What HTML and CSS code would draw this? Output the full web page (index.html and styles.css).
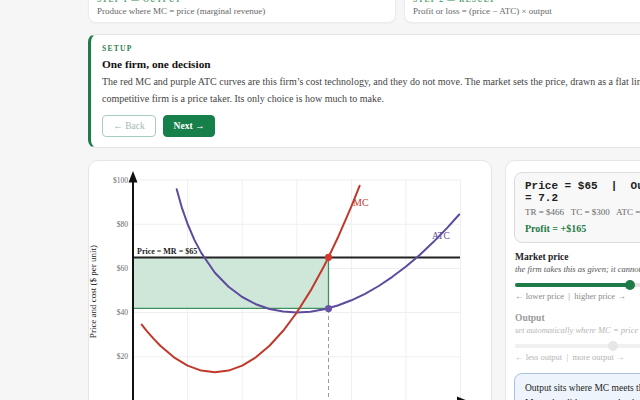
FILE: index.html
```html
<!DOCTYPE html>
<html lang="en">
<head>
<meta charset="utf-8">
<title>One firm, one decision</title>
<link rel="stylesheet" href="styles.css">
</head>
<body>
<div class="page">
  <div class="steps">
    <div class="step">
      <div class="step-label">STEP 1 — OUTPUT</div>
      <div class="step-text">Produce where MC = price (marginal revenue)</div>
    </div>
    <div class="step">
      <div class="step-label">STEP 2 — RESULT</div>
      <div class="step-text">Profit or loss = (price − ATC) × output</div>
    </div>
  </div>

  <section class="setup">
    <div class="setup-label">SETUP</div>
    <h2 class="setup-title">One firm, one decision</h2>
    <p class="setup-body">The red MC and purple ATC curves are this firm’s cost technology, and they do not move. The market sets the price, drawn as a flat line, because a competitive firm is a price taker. Its only choice is how much to make.</p>
    <div class="buttons">
      <button class="btn btn-back">← Back</button>
      <button class="btn btn-next">Next →</button>
    </div>
  </section>

  <div class="main">
    <div class="chart-card">
      <svg class="chart" width="402" height="298" viewBox="89 161 402 298" xmlns="http://www.w3.org/2000/svg">
        <g class="grid" stroke="#efefef" stroke-width="1">
          <line x1="133" y1="180" x2="460.6" y2="180"/>
          <line x1="133" y1="224.3" x2="460.6" y2="224.3"/>
          <line x1="133" y1="268.5" x2="460.6" y2="268.5"/>
          <line x1="133" y1="312.5" x2="460.6" y2="312.5"/>
          <line x1="133" y1="356.8" x2="460.6" y2="356.8"/>
          <line x1="187.6" y1="180" x2="187.6" y2="401"/>
          <line x1="242.2" y1="180" x2="242.2" y2="401"/>
          <line x1="296.8" y1="180" x2="296.8" y2="401"/>
          <line x1="351.4" y1="180" x2="351.4" y2="401"/>
          <line x1="406" y1="180" x2="406" y2="401"/>
          <line x1="460.6" y1="180" x2="460.6" y2="401"/>
        </g>
        <g class="ticks" font-family="Liberation Serif, serif" font-size="7.5" fill="#666" text-anchor="end">
          <text x="128" y="182.5">$100</text>
          <text x="128" y="226.8">$80</text>
          <text x="128" y="271">$60</text>
          <text x="128" y="315">$40</text>
          <text x="128" y="359.3">$20</text>
        </g>
        <text x="94" y="291.5" transform="rotate(-90 94 291.5)" text-anchor="middle" dominant-baseline="middle" font-family="Liberation Serif, serif" font-size="9" fill="#222">Price and cost ($ per unit)</text>

        <rect x="133" y="257.2" width="195.5" height="51.1" fill="#cfe7d9"/>
        <line x1="133" y1="308.3" x2="328.5" y2="308.3" stroke="#3f8f61" stroke-width="1.3"/>
        <line x1="328.5" y1="257.2" x2="328.5" y2="308.3" stroke="#3f8f61" stroke-width="1.3"/>
        <line x1="328.5" y1="309" x2="328.5" y2="401" stroke="#9a9a9a" stroke-width="1" stroke-dasharray="4 3"/>

        <line x1="133" y1="257.5" x2="460" y2="257.5" stroke="#222" stroke-width="2"/>
        <text x="137" y="254" font-family="Liberation Serif, serif" font-size="8" font-weight="bold" fill="#222">Price = MR = $65</text>

        <polyline fill="none" stroke="#5e4b9e" stroke-width="2" stroke-linejoin="round" stroke-linecap="round"
          points="176.7,189.3 182.1,208.4 187.6,224 194.4,239.9 201.25,252.9 214.9,272.7 228.55,286.8 242.2,297.0 255.85,304.2 269.5,309.0 283.15,311.6 296.8,312.5 310.45,311.7 324.1,309.3 337.75,305.5 351.4,300.3 365.05,293.8 378.7,286.0 392.35,276.8 406,266.5 419.65,254.9 433.3,242.1 446.95,228.1 459.2,214.5"/>
        <polyline fill="none" stroke="#c0392b" stroke-width="2" stroke-linejoin="round" stroke-linecap="round"
          points="141.7,324.6 146.65,330.8 153.5,338.6 160.3,345.7 173.95,357.3 187.6,365.6 201.25,370.6 214.9,372.2 228.55,370.6 242.2,365.6 255.85,357.3 269.5,345.7 283.15,330.8 296.8,312.5 310.45,290.9 324.1,266.0 328.5,257.2 337.75,237.8 351.4,206.3 359.6,185.8"/>
        <text x="353" y="206" font-family="Liberation Serif, serif" font-size="10" fill="#c0392b">MC</text>
        <text x="432" y="238.5" font-family="Liberation Serif, serif" font-size="9.5" fill="#5e4b9e">ATC</text>

        <circle cx="328.5" cy="257.3" r="3.6" fill="#d0392b"/>
        <circle cx="328.5" cy="308.6" r="3.6" fill="#6a54a8"/>

        <line x1="133" y1="182" x2="133" y2="401" stroke="#111" stroke-width="2"/>
        <polygon points="133,171 128.5,182.5 137.5,182.5" fill="#111"/>
        <line x1="133" y1="401" x2="460" y2="401" stroke="#111" stroke-width="2"/>
        <polygon points="468,401 457,396.5 457,405.5" fill="#111"/>
      </svg>
    </div>

    <aside class="panel">
      <div class="result">
        <div class="result-head">Price = $65&nbsp;&nbsp;|&nbsp;&nbsp;Output = 7.2</div>
        <div class="result-line">TR = $466&nbsp;&nbsp; TC = $300&nbsp;&nbsp; ATC = $41.67</div>
        <div class="result-profit">Profit = +$165</div>
      </div>

      <div class="control">
        <div class="control-title">Market price</div>
        <div class="control-note">the firm takes this as given; it cannot set it</div>
        <div class="slider">
          <div class="slider-fill" style="width: 61%"></div>
          <div class="slider-thumb" style="left: 61%"></div>
        </div>
        <div class="control-hint">← lower price&nbsp;&nbsp;|&nbsp;&nbsp;higher price →</div>
      </div>

      <div class="control control-off">
        <div class="control-title">Output</div>
        <div class="control-note">set automatically where MC = price</div>
        <div class="slider">
          <div class="slider-fill" style="width: 52%"></div>
          <div class="slider-thumb" style="left: 52%"></div>
        </div>
        <div class="control-hint">← less output&nbsp;&nbsp;|&nbsp;&nbsp;more output →</div>
      </div>

      <div class="info">Output sits where MC meets the price line. Move the slider to see what happens to profit.</div>
    </aside>
  </div>
</div>
</body>
</html>
```

FILE: styles.css
```css
html, body {
  margin: 0;
  padding: 0;
}

body {
  background: #f6f6f6;
  font-family: "Liberation Serif", "Times New Roman", serif;
  color: #222;
  overflow: hidden;
  display: flow-root;
}

.page {
  width: 624px;
  margin: -14px 0 0 88px;
}

/* step cards */
.steps {
  display: grid;
  grid-template-columns: 308px 308px;
  gap: 8px;
}

.step {
  background: #fff;
  border: 1px solid #ececec;
  border-radius: 8px;
  padding: 8px 8px 4px;
  box-shadow: 0 1px 2px rgba(0, 0, 0, 0.03);
}

.step-label {
  font-size: 7.5px;
  line-height: 10px;
  letter-spacing: 1.2px;
  font-weight: bold;
  color: #5a9e74;
}

.step-text {
  font-size: 9px;
  line-height: 13px;
  color: #666;
}

/* setup card */
.setup {
  margin-top: 11px;
  background: #fff;
  border: 1px solid #e4e4e4;
  border-left: 3px solid #1e7a46;
  border-radius: 8px;
  padding: 9px 14px 10px 11px;
}

.setup-label {
  font-size: 7.5px;
  line-height: 10px;
  letter-spacing: 1.3px;
  font-weight: bold;
  color: #2e7d4f;
}

.setup-title {
  margin: 2.5px 0 0;
  font-size: 11.3px;
  line-height: 15px;
  font-weight: bold;
  color: #111;
}

.setup-body {
  margin: 1px 0 0;
  font-size: 10px;
  line-height: 17px;
  color: #444;
}

.buttons {
  display: flex;
  gap: 7px;
  margin-top: 8.5px;
}

.btn {
  height: 22px;
  padding: 0;
  border-radius: 4px;
  font-family: "Liberation Serif", "Times New Roman", serif;
  font-size: 9.5px;
  white-space: nowrap;
}

.btn-back {
  background: #fff;
  border: 1px solid #a9cbc6;
  color: #a3b8b4;
  width: 54px;
}

.btn-next {
  background: #17804a;
  border: 1px solid #17804a;
  color: #fff;
  font-weight: bold;
  width: 52px;
}

/* main area */
.main {
  display: grid;
  grid-template-columns: 404px 207px;
  gap: 13px;
  margin-top: 12px;
  align-items: start;
}

.chart-card {
  background: #fff;
  border: 1px solid #e6e6e6;
  border-radius: 10px;
  height: 298px;
  overflow: hidden;
}

.chart {
  display: block;
}

.panel {
  background: #fff;
  border: 1px solid #e6e6e6;
  border-radius: 10px;
  padding: 11px 8px 12px;
}

.result {
  background: #f8f8f8;
  border: 1px solid #dcdcdc;
  border-radius: 8px;
  padding: 6.5px 20px 6.5px 10px;
}

.result-head {
  font-family: "Liberation Mono", "Courier New", monospace;
  font-weight: bold;
  font-size: 11px;
  line-height: 12px;
  color: #222;
}

.result-line {
  margin-top: 2px;
  font-size: 9px;
  line-height: 13px;
  color: #666;
  white-space: nowrap;
}

.result-profit {
  margin-top: 3px;
  font-size: 10px;
  line-height: 14px;
  font-weight: bold;
  color: #1e7a46;
}

.control {
  margin-top: 7.5px;
  padding-left: 1px;
}

.control + .control {
  margin-top: 10px;
}

.control-title {
  font-size: 9.5px;
  line-height: 13px;
  font-weight: bold;
  color: #222;
}

.control-note {
  font-size: 8.5px;
  line-height: 10px;
  font-style: italic;
  color: #555;
  white-space: nowrap;
}

.slider {
  position: relative;
  height: 4px;
  margin: 9.5px 0 3.5px;
  border-radius: 2px;
  background: #e2e2e2;
}

.slider-fill {
  height: 100%;
  border-radius: 2px;
  background: #1e7a46;
}

.slider-thumb {
  position: absolute;
  top: 50%;
  width: 10px;
  height: 10px;
  margin: -5px 0 0 -5px;
  border-radius: 50%;
  background: #1e7a46;
}

.control-hint {
  margin-top: 1px;
  font-size: 8.5px;
  line-height: 11px;
  color: #888;
  white-space: nowrap;
}

.control-off .control-title {
  color: #9a9a9a;
}

.control-off .control-note,
.control-off .control-hint {
  color: #b5b5b5;
}

.control-off .slider {
  background: #f0f0f0;
}

.control-off .slider-fill {
  background: #f0f0f0;
}

.control-off .slider-thumb {
  background: #e6e6e6;
}

.info {
  margin-top: 10.5px;
  background: #eef4fc;
  border: 1px solid #a9bfe0;
  border-radius: 8px;
  padding: 6.5px 10px 8px;
  font-size: 9.5px;
  line-height: 15px;
  color: #222;
}
```
